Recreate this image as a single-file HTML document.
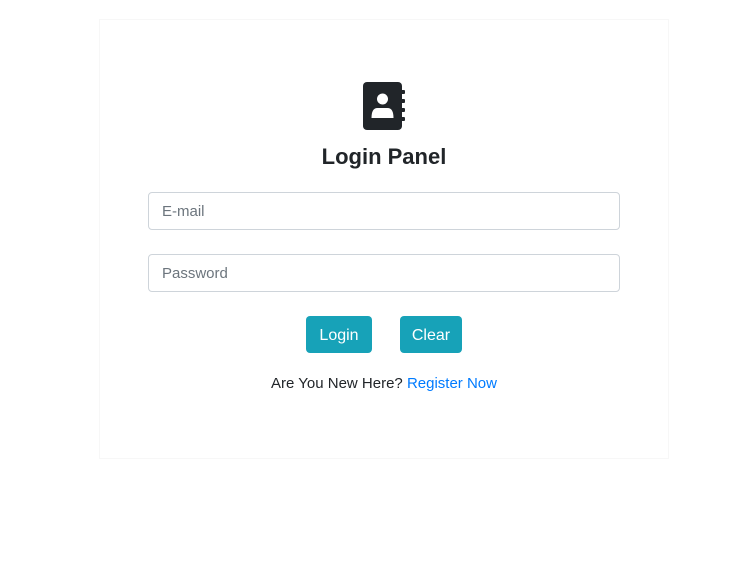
<!DOCTYPE html>
<html><head><style>
body{margin:0;background:#fff;font-family:"Liberation Sans",sans-serif;width:756px;height:572px;position:relative;overflow:hidden}
.card{position:absolute;left:99px;top:19px;width:568px;height:438px;border:1px solid #f7f7f7}
.inp{position:absolute;left:148px;height:36px;border:1px solid #ced4da;border-radius:4px;color:#6c757d;font-size:15px;line-height:38px;padding-left:13px;box-sizing:content-box;width:457px}
.btn{position:absolute;top:316px;height:37px;background:#17a2b8;color:#fff;border-radius:4px;font-size:16px;line-height:39px;text-align:center}
h1{position:absolute;top:144px;left:6px;width:756px;text-align:center;margin:0;font-size:22px;font-weight:600;color:#212529}
.t{position:absolute;top:375px;left:0;width:768px;text-align:center;font-size:15px;color:#212529}
</style></head><body>
<div class="card"></div>
<svg style="position:absolute;left:362px;top:82px" width="44" height="48" viewBox="0 0 44 48">
<rect x="1" y="0" width="39" height="48" rx="4" fill="#212529"/>
<rect x="39" y="8" width="4" height="4" rx="1" fill="#212529"/>
<rect x="39" y="17" width="4" height="4" rx="1" fill="#212529"/>
<rect x="39" y="26" width="4" height="4" rx="1" fill="#212529"/>
<rect x="39" y="35" width="4" height="4" rx="1" fill="#212529"/>
<circle cx="20.5" cy="17" r="5.5" fill="#fff"/>
<path d="M9.5 36 Q9.5 26 15.5 26 H25.5 Q31.5 26 31.5 36 Z" fill="#fff"/>
</svg>
<h1>Login Panel</h1>
<div class="inp" style="top:192px">E-mail</div>
<div class="inp" style="top:254px">Password</div>
<div class="btn" style="left:306px;width:66px">Login</div>
<div class="btn" style="left:400px;width:62px">Clear</div>
<div class="t">Are You New Here? <span style="color:#007bff">Register Now</span></div>
</body></html>
